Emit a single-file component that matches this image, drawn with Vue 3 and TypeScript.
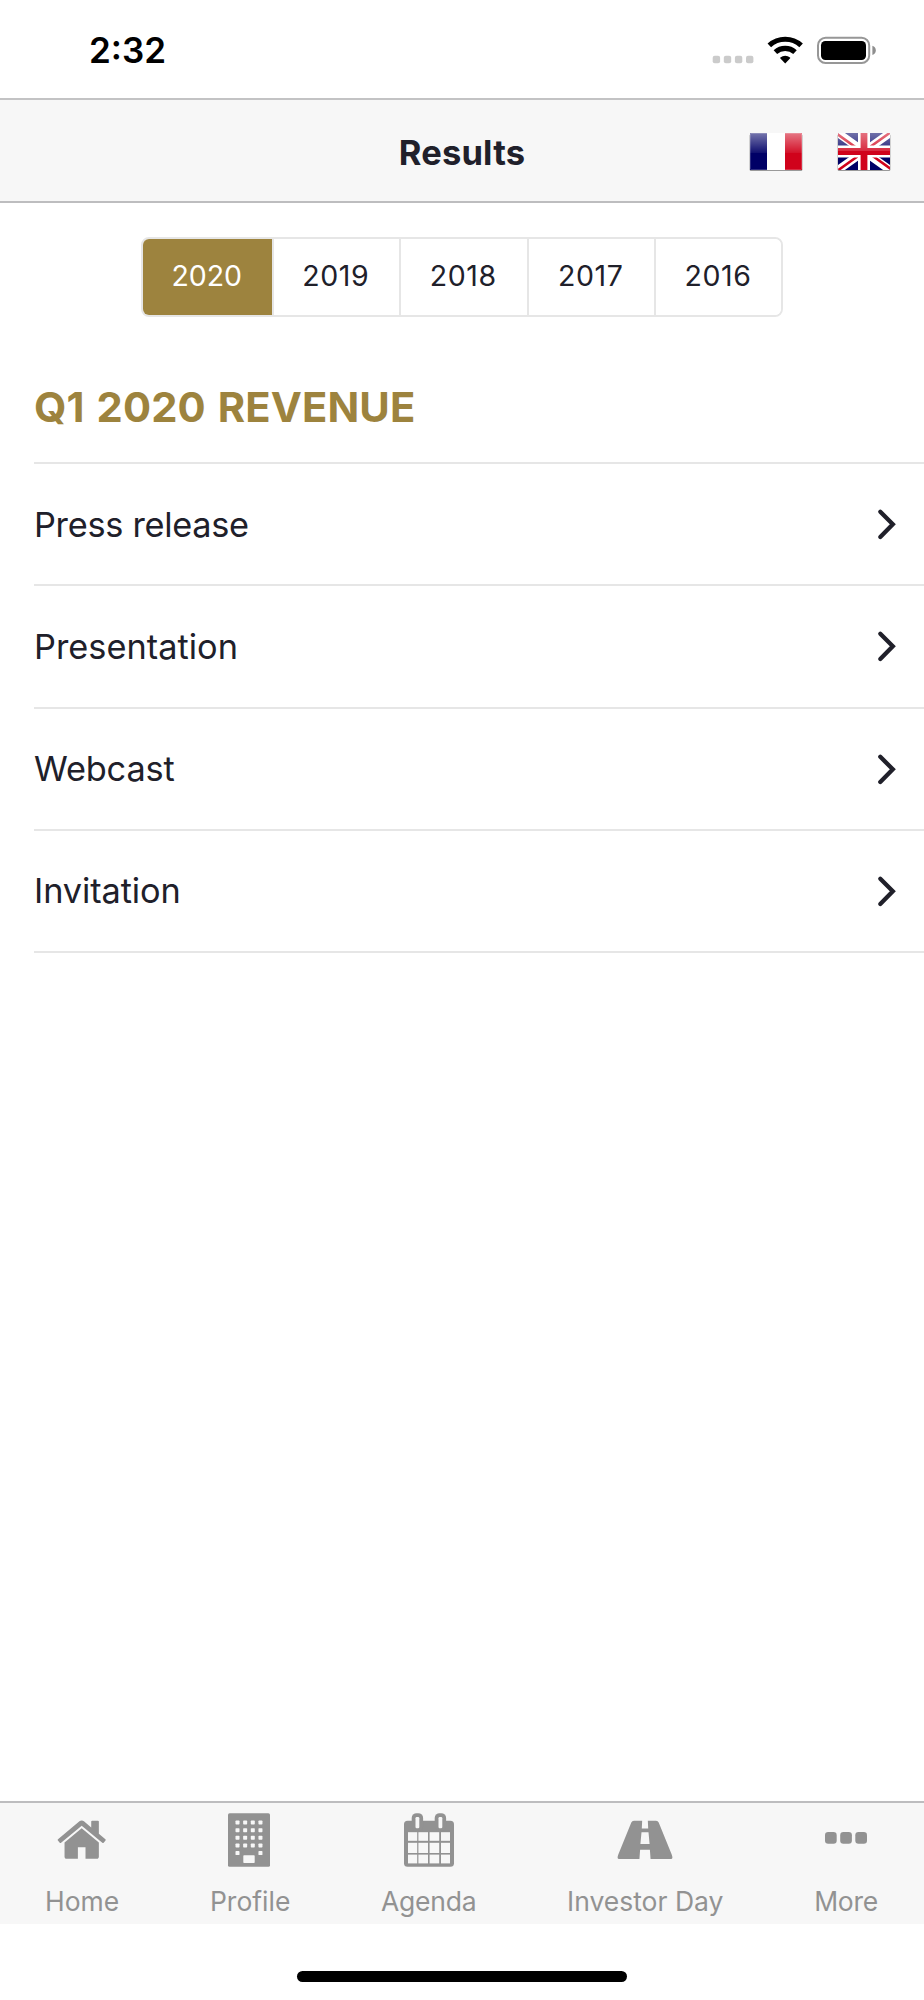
<script setup lang="ts">
import { ref } from 'vue'

interface Doc { label: string; cls: string }
interface Tab { label: string; icon: 'home' | 'building' | 'calendar' | 'road' | 'more' }

const years = ['2020', '2019', '2018', '2017', '2016']
const activeYear = ref('2020')

const docs: Doc[] = [
  { label: 'Press release', cls: 'press' },
  { label: 'Presentation', cls: 'presentation' },
  { label: 'Webcast', cls: 'webcast' },
  { label: 'Invitation', cls: 'invitation' },
]

const tabs: Tab[] = [
  { label: 'Home', icon: 'home' },
  { label: 'Profile', icon: 'building' },
  { label: 'Agenda', icon: 'calendar' },
  { label: 'Investor Day', icon: 'road' },
  { label: 'More', icon: 'more' },
]

// Lit windows of the office building, laid out on a 4-column grid
const windows: { x: number; y: number }[] = []
for (let r = 0; r < 5; r++) {
  for (let c = 0; c < 4; c++) {
    if (r === 4 && (c === 1 || c === 2)) continue
    windows.push({ x: 7.5 + c * 7.65, y: 7.5 + r * 7.65 })
  }
}

// Day cells of the calendar
const cells: { x: number; y: number; w: number; h: number }[] = []
const colSpans = [[4, 9.2], [14.4, 9.6], [25.6, 9.6], [37, 9]]
const rowSpans = [[19.2, 8.6], [29.8, 10.2], [41.6, 8.8]]
for (const [y, h] of rowSpans) for (const [x, w] of colSpans) cells.push({ x, y, w, h })
</script>

<template>
  <div class="screen">
    <div class="status">
      <span class="time">2:32</span>
      <svg class="indicators" width="170" height="40" viewBox="0 0 170 40">
        <g fill="#cbcbcb">
          <rect x="2.7" y="25.7" width="7.4" height="7.5" rx="2" />
          <rect x="13.8" y="25.7" width="7.4" height="7.5" rx="2" />
          <rect x="24.9" y="25.7" width="7.4" height="7.5" rx="2" />
          <rect x="36" y="25.7" width="7.4" height="7.5" rx="2" />
        </g>
        <g fill="none" stroke="#000" stroke-width="5.2">
          <path d="M59.3 15.4A23.6 23.6 0 0 1 91.1 15.4" />
          <path d="M65.4 22.1A14.6 14.6 0 0 1 85 22.1" />
        </g>
        <path d="M75.2 33.4L70.2 28.2Q70 27.8 70.4 27.5A7.4 7.4 0 0 1 80 27.5Q80.4 27.8 80.2 28.2Z" fill="#000" />
        <rect x="108" y="7.8" width="51.2" height="25.2" rx="7.6" fill="#fff" stroke="#979797" stroke-width="2" />
        <rect x="111" y="11" width="45" height="19" rx="4.4" fill="#000" />
        <path d="M162.4 15.8Q165.8 17 165.8 20.4Q165.8 23.8 162.4 25Z" fill="#8e8e8e" />
      </svg>
    </div>

    <header class="navbar">
      <h1 class="nav-title">Results</h1>
      <div class="flags">
        <svg width="54" height="40" viewBox="0 0 54 40">
          <defs>
            <linearGradient id="gloss" x1="0" y1="0" x2="0" y2="1">
              <stop offset="0" stop-color="#fff" stop-opacity=".46" />
              <stop offset="1" stop-color="#fff" stop-opacity=".06" />
            </linearGradient>
          </defs>
          <rect x=".6" y="2" width="52.8" height="37" rx="1.5" fill="#000" opacity=".38" />
          <rect x="1" y="1" width="52" height="37" rx="1" fill="#fff" />
          <rect x="1" y="1" width="17" height="37" fill="#000066" />
          <rect x="36" y="1" width="17" height="37" fill="#d0021b" />
          <rect x="1" y="1" width="52" height="20" fill="url(#gloss)" />
          <rect x="1.5" y="1.5" width="51" height="36" rx=".6" fill="none" stroke="#fff" stroke-opacity=".18" />
        </svg>
        <svg width="54" height="40" viewBox="0 0 54 40">
          <defs>
            <clipPath id="uk"><rect x="1" y="1" width="52" height="37" rx="1" /></clipPath>
            <linearGradient id="gloss-uk" x1="0" y1="0" x2="0" y2="1">
              <stop offset="0" stop-color="#fff" stop-opacity=".44" />
              <stop offset="1" stop-color="#fff" stop-opacity=".16" />
            </linearGradient>
          </defs>
          <rect x=".6" y="2" width="52.8" height="37" rx="1.5" fill="#000" opacity=".38" />
          <g clip-path="url(#uk)">
            <rect x="1" y="1" width="52" height="37" fill="#000066" />
            <path d="M1 1L53 38M53 1L1 38" stroke="#fff" stroke-width="8" />
            <path d="M0 2L27 21.2M54 37L27 17.8M54 0L27 19.2M0 39L27 19.8" stroke="#d0021b" stroke-width="2.6" />
            <path d="M27 0V40M0 19.5H54" stroke="#fff" stroke-width="12" />
            <path d="M27 0V40M0 19.5H54" stroke="#d0021b" stroke-width="6.8" />
            <rect x="1" y="1" width="52" height="18" fill="url(#gloss-uk)" />
          </g>
        </svg>
      </div>
    </header>

    <main class="content">
      <div class="segments">
        <button
          v-for="year in years"
          :key="year"
          class="segment"
          :class="{ active: year === activeYear }"
          @click="activeYear = year"
        >{{ year }}</button>
      </div>

      <section class="results">
        <h2 class="heading">Q1 2020 REVENUE</h2>
        <div v-for="doc in docs" :key="doc.label" class="row">
          <span :class="doc.cls">{{ doc.label }}</span>
          <svg width="20" height="32" viewBox="0 0 20 32">
            <path d="M3.3 3.8L15.8 16.3L3.3 28.9" fill="none" stroke="#20202a" stroke-width="4.3" stroke-linecap="round" stroke-linejoin="miter" />
          </svg>
        </div>
      </section>
    </main>

    <nav class="tabbar">
      <a v-for="tab in tabs" :key="tab.label" class="tab" :class="tab.icon">
        <svg v-if="tab.icon === 'home'" class="icon" width="53.4" height="54" viewBox="0 0 1792 1812">
          <path d="M1472 992v480q0 26-19 45t-45 19h-384v-384h-256v384h-384q-26 0-45-19t-19-45v-480q0-1 .5-3t.5-3l575-474 575 474q1 2 1 6zm223-69l-62 74q-8 9-21 11h-3q-13 0-21-7l-692-577-692 577q-12 8-24 7-13-2-21-11l-62-74q-8-10-7-23.500t11-21.500l719-599q32-26 76-26t76 26l244 204v-195q0-14 9-23t23-9h192q14 0 23 9t9 23v408l219 182q10 8 11 21.500t-7 23.500z" />
        </svg>
        <svg v-else-if="tab.icon === 'building'" class="icon" width="42" height="54" viewBox="0 0 42 54">
          <rect y=".2" width="42" height="53.600" rx="1.600" />
          <g class="hole">
            <rect v-for="(w, i) in windows" :key="i" :x="w.x" :y="w.y" width="4" height="4" rx=".7" />
            <rect x="15.300" y="42.300" width="11.400" height="7.600" rx=".7" />
          </g>
        </svg>
        <svg v-else-if="tab.icon === 'calendar'" class="icon" width="50" height="54" viewBox="0 0 50 54">
          <rect y="7.700" width="50" height="46.100" rx="3.600" />
          <rect x="7.700" y=".2" width="11.400" height="18" rx="4.800" />
          <rect x="30.700" y=".2" width="11.400" height="18" rx="4.800" />
          <g class="hole">
            <rect x="11.500" y="4" width="3.800" height="11.200" rx="1.200" />
            <rect x="34.500" y="4" width="3.800" height="11.200" rx="1.200" />
            <rect v-for="(c, i) in cells" :key="i" :x="c.x" :y="c.y" :width="c.w" :height="c.h" />
          </g>
        </svg>
        <svg v-else-if="tab.icon === 'road'" class="icon" width="56" height="54" viewBox="0 0 56 54">
          <path d="M17 7.700H39Q41 7.700 41.700 9.600L54.700 41.500Q56.300 45.900 54.300 45.900H1.700Q-.3 45.900 1.300 41.500L14.300 9.600Q15 7.700 17 7.700Z" />
          <path class="hole" d="M25.200 7H30.800L31.200 15.500H24.800ZM24.500 19.200H31.500L32.600 31H23.400ZM23.100 36.700H32.900L33.600 46.500H22.400Z" />
        </svg>
        <svg v-else class="icon" width="42" height="54" viewBox="0 0 42 54">
          <rect y="19.100" width="11.700" height="11.700" rx="3.200" />
          <rect x="15.200" y="19.100" width="11.700" height="11.700" rx="3.200" />
          <rect x="30.300" y="19.100" width="11.700" height="11.700" rx="3.200" />
        </svg>
        <span class="tab-label">{{ tab.label }}</span>
      </a>
    </nav>

    <div class="home-area"><div class="home-indicator"></div></div>
  </div>
</template>

<style>
body { margin: 0; background: #fff; }
</style>

<style scoped>
.screen {
  width: 924px;
  height: 2000px;
  display: flex;
  flex-direction: column;
  overflow: hidden;
  background: #fff;
  color: #20202a;
  font-family: Inter, 'Liberation Sans', sans-serif;
}
.status {
  height: 98px;
  flex: none;
  box-sizing: border-box;
  padding: 0 44px 0 89px;
  display: flex;
  justify-content: space-between;
  align-items: flex-start;
}
.time {
  margin-top: 30px;
  line-height: 41px;
  font-size: 35px;
  font-weight: 600;
  color: #000;
  letter-spacing: 0;
}
.indicators { margin-top: 30px; }
.navbar {
  height: 105px;
  flex: none;
  box-sizing: border-box;
  border-top: 2px solid #c3c3c4;
  border-bottom: 2px solid #bdbdbf;
  background: #f7f7f7;
  display: grid;
  grid-template-columns: 1fr auto 1fr;
  align-items: center;
}
.nav-title {
  grid-column: 2;
  margin: 5px 0 0;
  line-height: 42px;
  font-size: 34.5px;
  font-weight: 700;
  letter-spacing: 0.2px;
}
.flags {
  justify-self: end;
  display: flex;
  gap: 34px;
  margin: 2px 33px 0 0;
}
.content { flex: 1; }
.segments {
  display: grid;
  grid-template-columns: 128.500px 127.500px 127.500px 127.500px 127px;
  width: 638px;
  height: 76px;
  margin: 34px auto 0;
  border: 2px solid #e6e6e6;
  border-radius: 8px;
  overflow: hidden;
}
.segment {
  border: 0;
  border-left: 2px solid #e6e6e6;
  padding: 0 1px 3px 0;
  background: #fff;
  color: inherit;
  font: 400 28.5px Inter, 'Liberation Sans', sans-serif;
  letter-spacing: 0.6px;
}
.segment:first-child { border-left: 0; }
.segment.active {
  background: #9d833e;
  color: #fff;
  letter-spacing: 0;
}
.results { margin-left: 34px; }
.heading {
  margin: 0;
  padding-top: 65px;
  height: 80px;
  border-bottom: 2px solid #e6e6e6;
  line-height: 51px;
  font-size: 41.7px;
  font-weight: 700;
  letter-spacing: 0.15px;
  word-spacing: 1.800px;
  color: #9d833e;
}
.row {
  height: 120.250px;
  border-bottom: 2px solid #e6e6e6;
  padding-right: 27px;
  display: flex;
  align-items: center;
  justify-content: space-between;
  font-size: 34.3px;
}
.press { letter-spacing: -0.28px; }
.presentation { letter-spacing: 0.03px; }
.webcast { letter-spacing: -0.15px; }
.invitation { letter-spacing: -0.08px; }
.tabbar {
  height: 123px;
  flex: none;
  box-sizing: border-box;
  border-top: 2px solid #bdbdbf;
  background: #f7f7f7;
  padding: 10px 46px 0 45px;
  display: flex;
  justify-content: space-between;
  color: #929292;
}
.tab {
  display: flex;
  flex-direction: column;
  align-items: center;
}
.icon { display: block; fill: #929292; }
.building .icon { margin-right: 3px; }
.hole { fill: #f7f7f7; }
.tab-label {
  margin-top: 18px;
  line-height: 33px;
  font-size: 26.5px;
  white-space: nowrap;
}
.calendar .tab-label { letter-spacing: -0.25px; }
.more .tab-label { letter-spacing: -0.25px; }
.home-area {
  height: 76px;
  flex: none;
  display: flex;
  justify-content: center;
  align-items: flex-start;
}
.home-indicator {
  width: 330px;
  height: 11px;
  margin-top: 47px;
  border-radius: 6px;
  background: #000;
}
</style>
